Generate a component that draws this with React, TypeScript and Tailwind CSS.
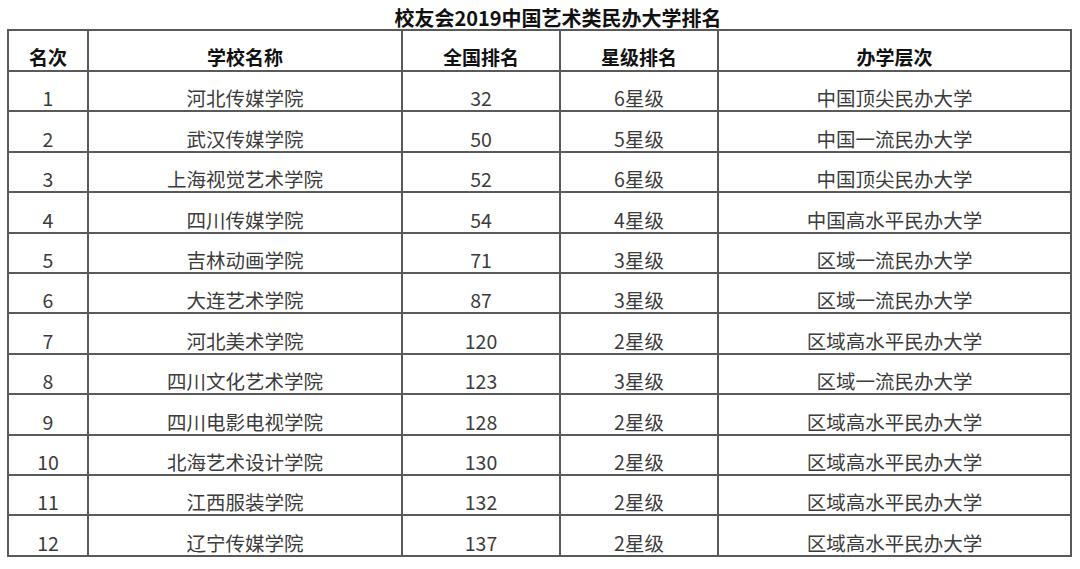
import React from "react";

const rows: [string, string, string, string, string][] = [
  ["1", "河北传媒学院", "32", "6星级", "中国顶尖民办大学"],
  ["2", "武汉传媒学院", "50", "5星级", "中国一流民办大学"],
  ["3", "上海视觉艺术学院", "52", "6星级", "中国顶尖民办大学"],
  ["4", "四川传媒学院", "54", "4星级", "中国高水平民办大学"],
  ["5", "吉林动画学院", "71", "3星级", "区域一流民办大学"],
  ["6", "大连艺术学院", "87", "3星级", "区域一流民办大学"],
  ["7", "河北美术学院", "120", "2星级", "区域高水平民办大学"],
  ["8", "四川文化艺术学院", "123", "3星级", "区域一流民办大学"],
  ["9", "四川电影电视学院", "128", "2星级", "区域高水平民办大学"],
  ["10", "北海艺术设计学院", "130", "2星级", "区域高水平民办大学"],
  ["11", "江西服装学院", "132", "2星级", "区域高水平民办大学"],
  ["12", "辽宁传媒学院", "137", "2星级", "区域高水平民办大学"],
];

const widths = ["w-[80px]", "w-[314px]", "w-[158px]", "w-[158px]", "w-[353px]"];
const headers = ["名次", "学校名称", "全国排名", "星级排名", "办学层次"];

export default function App() {
  return (
    <div
      className="w-[1080px] h-[569px] bg-white overflow-hidden"
      style={{ fontFamily: '"Noto Sans CJK SC", "Noto Sans", sans-serif' }}
    >
      <div className="h-[29px] pt-[8px] pl-[36px] text-center font-bold text-[20px] leading-[20px] text-[#111]">
        校友会2019中国艺术类民办大学排名
      </div>
      <div className="ml-[7px] w-[1065px] border-l-2 border-t-2 border-[#5a5a5a]">
        <div className="flex h-[41px]">
          {headers.map((h, i) => (
            <div
              key={i}
              className={`${widths[i]} shrink-0 border-r-2 border-b-2 border-[#5a5a5a] flex items-end justify-center pb-[1px] font-bold text-[19px] leading-[24px] text-[#111]`}
            >
              {h}
            </div>
          ))}
        </div>
        {rows.map((r, ri) => (
          <div key={ri} className="flex h-[40.4px]">
            {r.map((c, i) => (
              <div
                key={i}
                className={`${widths[i]} shrink-0 border-r-2 border-b-2 border-[#5a5a5a] flex items-end justify-center text-[19.5px] leading-[24px] text-[#3c3c3c]`}
              >
                {c}
              </div>
            ))}
          </div>
        ))}
      </div>
    </div>
  );
}
